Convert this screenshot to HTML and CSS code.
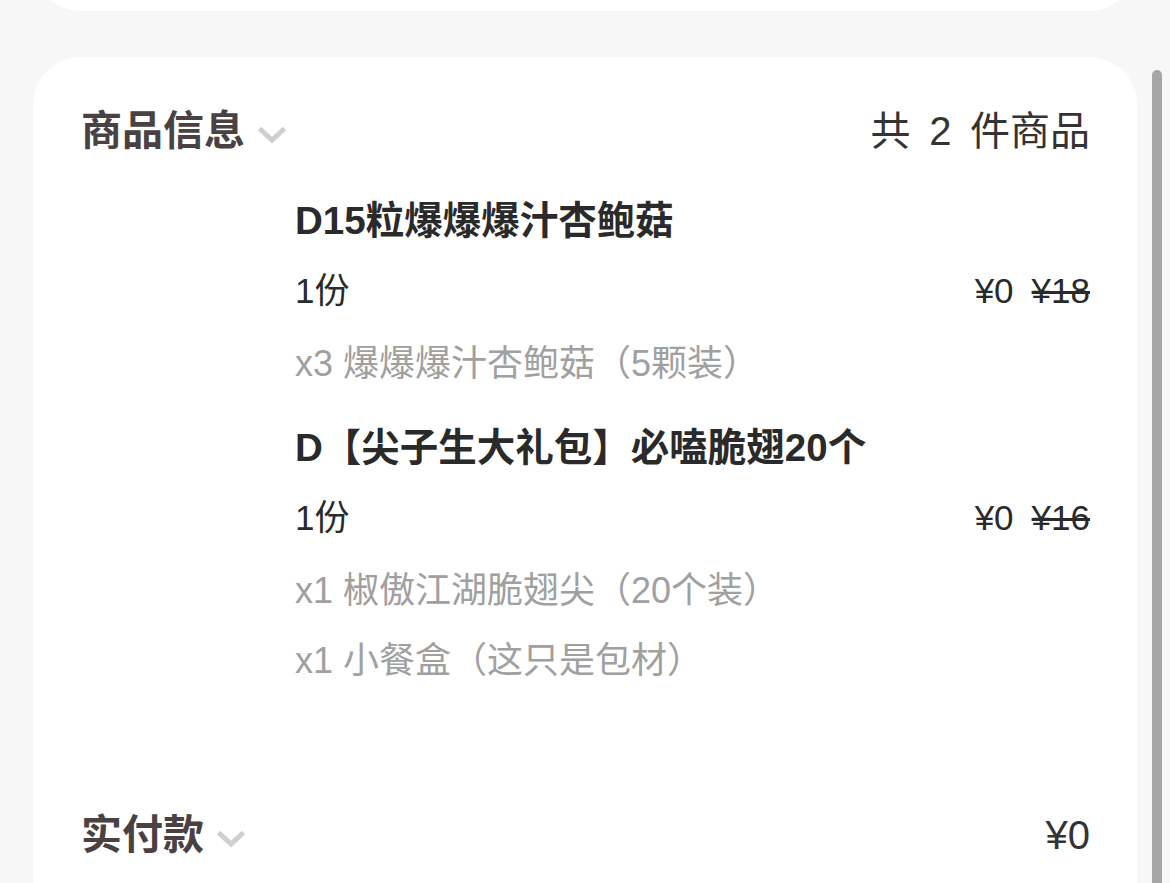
FILE: index.html
```html
<!DOCTYPE html>
<html lang="zh-CN">
<head>
<meta charset="utf-8">
<title>订单详情</title>
<link rel="stylesheet" href="styles.css">
</head>
<body>
<div class="page">
  <div class="top-card"></div>
  <section class="card">
    <div class="header">
      <div class="header-left">
        <span class="header-title">商品信息</span>
        <svg class="chevron" width="30" height="18" viewBox="0 0 30 18"><path d="M2.5 2.5 L15 14 L27.5 2.5" fill="none" stroke="#cfcfcf" stroke-width="5"/></svg>
      </div>
      <span class="count">共 2 件商品</span>
    </div>

    <div class="items">
      <div class="item">
        <div class="item-title">D15粒爆爆爆汁杏鲍菇</div>
        <div class="item-row">
          <span class="qty">1份</span>
          <span class="prices"><span class="price">¥0</span><span class="price old">¥18</span></span>
        </div>
        <div class="sub">x3 爆爆爆汁杏鲍菇（5颗装）</div>
      </div>
      <div class="item">
        <div class="item-title">D【尖子生大礼包】必嗑脆翅20个</div>
        <div class="item-row">
          <span class="qty">1份</span>
          <span class="prices"><span class="price">¥0</span><span class="price old">¥16</span></span>
        </div>
        <div class="sub">x1 椒傲江湖脆翅尖（20个装）</div>
        <div class="sub">x1 小餐盒（这只是包材）</div>
      </div>
    </div>

    <div class="header total">
      <div class="header-left">
        <span class="header-title">实付款</span>
        <svg class="chevron" width="30" height="18" viewBox="0 0 30 18"><path d="M2.5 2.5 L15 14 L27.5 2.5" fill="none" stroke="#cfcfcf" stroke-width="5"/></svg>
      </div>
      <span class="total-amount">¥0</span>
    </div>
  </section>
</div>
<div class="scroll-thumb"></div>
</body>
</html>
```

FILE: styles.css
```css
html, body {
  margin: 0;
  padding: 0;
  height: 883px;
  overflow: hidden;
  background: #f7f7f7;
  font-family: "Liberation Sans", "Noto Sans CJK SC", sans-serif;
}

.page {
  display: flex;
  flex-direction: column;
}

.top-card {
  height: 120px;
  margin: -109px 33px 0;
  background: #ffffff;
  border-radius: 48px;
}

.card {
  margin: 46px 33px 0;
  background: #ffffff;
  border-radius: 48px 48px 0 0;
  padding: 46px 47px 60px 48px;
  min-height: 700px;
}

.header {
  display: flex;
  justify-content: space-between;
  align-items: center;
  height: 56px;
}

.header-left {
  display: flex;
  align-items: center;
}

.header-title {
  font-size: 41px;
  font-weight: 700;
  color: #4a4242;
  line-height: 56px;
}

.chevron {
  margin-left: 12px;
  margin-top: 8px;
}

.count {
  font-size: 40px;
  color: #333333;
  word-spacing: 7.5px;
  line-height: 56px;
}

.items {
  margin: 27px 0 0 214px;
  display: flex;
  flex-direction: column;
  gap: 17px;
}

.item-title {
  font-size: 38.5px;
  font-weight: 700;
  color: #2a2a2a;
  line-height: 70px;
  height: 70px;
}

.item-row {
  display: flex;
  justify-content: space-between;
  align-items: baseline;
  height: 70px;
  line-height: 70px;
}

.qty {
  font-size: 35px;
  color: #2a2a2a;
}

.prices {
  display: flex;
  gap: 18px;
}

.price {
  font-size: 35px;
  color: #2a2a2a;
}

.price.old {
  text-decoration: line-through;
  text-decoration-thickness: 3px;
}

.sub {
  font-size: 36px;
  color: #a0a0a0;
  line-height: 64px;
  height: 64px;
  padding-top: 6px;
}

.total {
  margin-top: 114px;
}

.total-amount {
  font-size: 40px;
  color: #333333;
  line-height: 56px;
}

.scroll-thumb {
  position: fixed;
  left: 1152px;
  top: 70px;
  width: 10px;
  height: 830px;
  background: #a5a5a5;
  border-radius: 5px 5px 0 0;
}
```
